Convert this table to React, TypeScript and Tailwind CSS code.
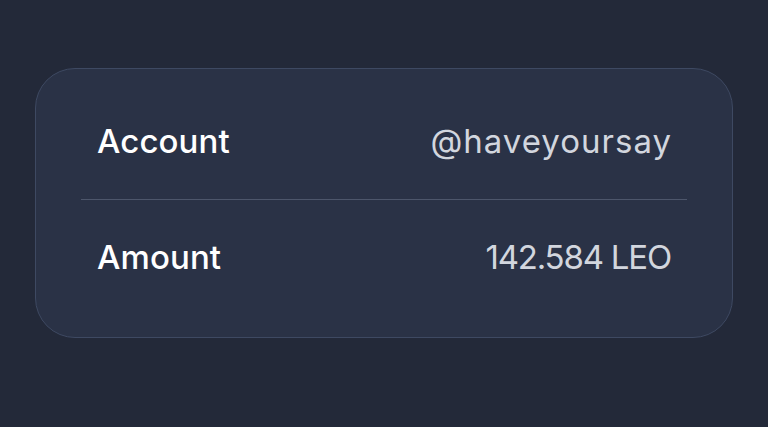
export default function App() {
  return (
    <div className="flex h-[427px] w-[768px] items-start justify-center bg-[#232939] pt-[68px] font-['Inter','Liberation_Sans',sans-serif]">
      <div className="w-[698px] rounded-[40px] border border-[#3e4962] bg-[#2a3246] px-[45px] pb-[21px] pt-[15px]">
        <div className="flex h-[116px] items-center justify-between border-b border-[#4d566b] pl-4 pr-[15px]">
          <span className="text-[33px] font-medium tracking-[0.1px] text-white">Account</span>
          <span className="text-[33px] tracking-[1px] text-[#d2d6de]">@haveyoursay</span>
        </div>
        <div className="flex h-[116px] items-center justify-between px-4">
          <span className="text-[33px] font-medium tracking-[0.1px] text-white">Amount</span>
          <span className="text-[33px] tracking-[-1.2px] text-[#d2d6de]">142.584 LEO</span>
        </div>
      </div>
    </div>
  )
}
